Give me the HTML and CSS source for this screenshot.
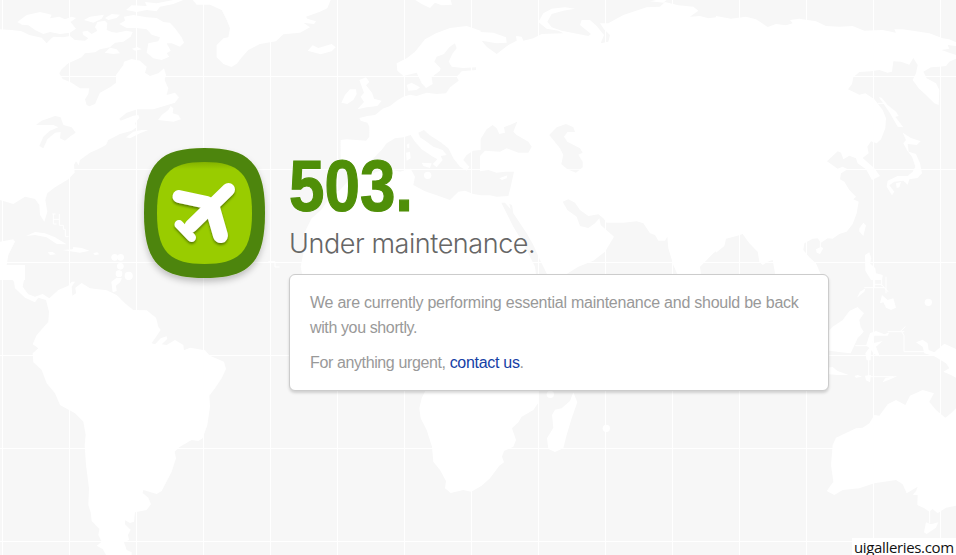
FILE: index.html
```html
<!DOCTYPE html>
<html lang="en">
<head>
<meta charset="utf-8">
<title>503. Under maintenance.</title>
<link rel="stylesheet" href="styles.css">
</head>
<body>
<svg class="map" width="956" height="555" viewBox="0 0 956 555" aria-hidden="true">
  <defs>
    <pattern id="grid" x="2" y="76" width="67" height="93" patternUnits="userSpaceOnUse">
      <path class="land" d="M0 0H67V1H1V93H0Z"/>
    </pattern>
  </defs>
  <rect width="956" height="555" fill="url(#grid)"/>

  <!-- North America, Greenland, Caribbean -->
  <g transform="scale(.33333)">
    <path class="land" d="M0 88L35 90 65 94 88 105 125 113 140 130 152 117 160 110 190 112 210 108 225 120 255 122 265 115 250 105 247 95 262 92 275 102 292 92 285 82 292 66 315 62 322 70 320 90 335 96 350 98 380 92 398 96 392 110 370 125 345 128 330 142 300 148 285 157 255 160 245 172 205 190 185 208 178 220 188 237 215 248 240 265 268 265 265 282 255 298 260 315 268 319 285 312 300 278 330 262 348 248 348 225 370 195 372 185 395 177 420 182 440 200 435 218 450 228 475 220 492 205 498 225 494 240 505 265 500 285 525 278 537 292 525 308 480 322 460 328 412 328 380 338 358 356 362 362 400 347 415 345 418 353 405 370 410 382 395 392 360 402 325 420 318 435 295 447 270 458 240 480 236 496 228 484 222 494 224 518 205 538 165 562 142 580 136 600 142 635 133 665 120 645 118 615 105 597 75 590 40 612 0 600Z"/>
    <path class="land" d="M52 66L80 45 120 36 155 44 150 55 178 50 195 58 215 50 228 54 212 66 228 86 210 98 180 102 150 96 130 102 105 90 85 76 66 74Z"/>
    <path class="land" d="M252 60L270 50 312 44 305 56 280 68ZM315 54L335 42 360 44 350 54 325 60ZM378 30L395 16 440 18 435 6 470 10 520 0 550 0 520 12 480 20 470 34 440 30 410 36ZM358 72L375 62 372 50 400 45 440 52 470 54 490 66 510 68 525 85 545 112 552 128 540 140 515 130 500 130 512 152 500 160 508 170 485 180 460 175 440 158 445 130 475 124 480 112 455 104 440 88 410 84 380 84ZM314 158L330 143 350 148 360 160 340 162ZM396 146L412 141 425 148 405 152ZM474 360L485 345 505 330 512 318 520 325 518 340 535 345 543 358 520 365ZM378 412L400 395 425 390 445 390 420 400 390 415Z"/>
    <path class="land" d="M578 0L722 0 722 176 712 190 695 201 670 192 650 172 650 135 670 115 685 112 690 85 680 60 665 30 630 14 590 14Z"/>
    <path class="sea" d="M108 375L125 362 165 348 182 352 190 375 215 382 227 398 212 408 195 422 180 415 182 396 165 398 142 418 130 445 118 438 130 410 150 392 175 382 160 375 135 375Z"/>
    <path class="land" d="M78 708L105 696 135 700 165 712 200 733 170 732 140 712 105 705ZM143 757L158 756 168 763 150 765ZM188 750L218 748 220 741 245 744 268 752 240 758ZM280 759L292 757 298 763 284 766ZM0 725L40 718 45 725 25 765 20 795 75 795 75 840 0 840Z"/>
    <circle class="land" cx="344" cy="772" r="10"/><circle class="land" cx="362" cy="772" r="10"/><circle class="land" cx="361" cy="799" r="10"/><circle class="land" cx="357" cy="821" r="10"/><circle class="land" cx="386" cy="829" r="11"/>
    <path class="coast" d="M157 642h10M160 642v30M160 658h18M178 642v34h12v12h6v22h10M160 672h10"/>
  </g>

  <!-- Atlantic, Europe, North Africa -->
  <g transform="translate(240 0) scale(.33333)">
    <path class="land" d="M0 0L272 0 262 25 240 35 198 50 202 56 228 64 222 72 190 68 210 82 180 98 130 103 108 124 60 132 25 150 0 178ZM203 152L218 136 235 144 275 132 287 142 275 154 242 163ZM526 0L632 0 636 14 605 16 585 8 570 24 545 12ZM358 240L378 232 388 246 378 256 396 278 402 296 425 302 412 318 380 322 352 328 372 306 362 290 372 278ZM304 308L315 285 330 268 348 268 350 282 340 300 322 312Z"/>
    <path class="land" d="M722 92L680 78 630 84 588 100 555 118 525 155 500 175 470 190 472 212 490 228 530 218 545 250 558 264 578 252 575 232 600 212 602 205 583 185 590 170 612 162 628 142 645 130 650 145 638 160 626 185 635 200 670 204 708 202 708 210 665 214 650 230 656 242 630 262 618 280 590 282 560 278 530 288 510 284 490 290 470 302 450 318 428 326 405 345 382 348 358 354 362 362 382 368 388 380 388 410 378 422 320 418 302 420 302 480 312 500 335 498 345 508 335 530 300 570 270 590 245 628 215 655 202 680 188 712 200 735 190 760 182 800 190 840 722 840 722 586 700 582 675 572 655 575 630 600 590 586 555 574 520 555 525 530 512 506 480 515 440 505 400 520 375 508 395 480 405 470 425 450 440 430 465 415 490 412 512 405 525 425 545 448 575 468 592 478 578 492 590 502 608 480 602 468 620 465 608 450 580 440 560 425 540 412 535 398 552 390 568 405 600 425 625 445 640 475 660 500 680 512 688 500 670 480 680 465 700 452 722 450Z"/>
    <path class="land" d="M500 255L515 248 540 262 530 270 505 272ZM500 434L508 430 508 445 502 444ZM498 458L510 455 512 475 500 482ZM545 488L575 490 570 504 550 498Z"/>
    <circle class="land" cx="563" cy="526" r="11"/>
    <path class="coast" d="M85 785h20v16h14"/>
  </g>

  <!-- Russia, Middle East, India -->
  <g transform="translate(480 0) scale(.33333)">
    <path class="land" d="M0 96L40 98 78 112 80 128 50 130 5 122 20 140 50 162 85 135 110 122 108 108 125 110 130 122 160 115 185 102 250 100 235 92 200 86 175 66 190 40 215 26 255 22 285 26 250 32 215 42 202 65 215 82 245 92 325 108 333 102 300 75 305 60 330 60 350 78 372 105 362 130 385 125 390 105 372 88 360 70 385 70 430 45 450 38 500 22 540 20 555 6 595 16 640 20 655 32 630 50 660 48 685 55 720 50 720 745 700 760 660 800 665 840 600 840 580 795 565 745 562 710 555 722 535 722 525 705 510 700 490 670 470 664 430 668 380 668 370 655 355 643 325 648 300 630 285 608 265 598 248 605 262 630 290 650 300 678 325 684 345 670 358 655 362 675 402 710 375 755 340 782 295 800 255 825 205 830 180 780 160 735 140 700 100 640 96 615 88 612 92 628 75 608 64 608 100 680 130 730 165 800 170 840 0 840 0 586 30 586 50 590 85 588 92 560 102 515 75 515 50 518 25 510 0 514 0 468 15 452 60 455 80 445 115 458 145 458 155 440 145 425 110 405 100 395 112 365 72 382 75 398 58 402 50 385 38 375 20 388 0 420Z"/>
    <path class="sea" d="M208 405L230 382 258 372 280 382 285 396 262 396 252 410 262 425 300 445 308 458 295 464 308 485 308 502 288 518 262 508 244 492 250 465 240 445Z"/>
    <path class="land" d="M58 535L82 526 80 535 66 540ZM510 4L530 0 560 0 550 8ZM243 508h66v2h-66Z"/>
  </g>

  <!-- East Asia -->
  <g transform="translate(716 0) scale(.33333)">
    <path class="land" d="M0 48L45 56 90 50 120 58 155 81 180 72 210 76 230 70 222 60 250 56 300 64 330 78 370 80 410 78 445 92 500 90 540 98 535 88 560 88 640 100 680 115 700 118 720 127 720 138 695 135 700 146 676 150 720 165 720 176 700 185 690 198 670 200 645 202 622 215 632 235 660 250 670 270 668 315 655 310 630 285 608 265 590 240 600 220 605 195 592 174 580 194 555 185 532 184 528 215 515 218 490 210 465 214 430 216 412 232 408 252 396 268 430 284 448 280 475 298 500 330 510 355 508 385 495 418 482 430 465 424 454 440 458 460 440 474 475 505 492 528 468 540 450 508 425 490 420 475 400 467 382 478 375 458 365 454 333 484 365 506 380 500 395 508 375 520 372 538 385 545 400 570 420 590 412 598 428 605 422 640 410 672 392 695 370 702 350 716 335 715 315 728 305 715 290 716 265 730 262 750 280 772 300 790 315 825 178 825 170 780 155 785 140 795 130 785 125 755 100 730 80 702 62 708 30 716 25 738 0 758Z"/>
    <path class="land" d="M488 291L498 294 515 315 540 335 548 348 538 350 562 382 545 380 522 340 505 315ZM560 398L585 414 614 424 602 435 575 432 578 455 600 462 612 490 618 520 605 534 580 538 575 554 562 542 535 545 520 556 535 575 528 586 512 560 515 542 545 528 575 528 590 515 598 500 588 470 574 452 562 430 570 420ZM540 550L555 546 550 562 542 564ZM430 685L442 668 450 676 442 708 430 695ZM300 748L315 740 322 745 312 762 302 758ZM447 765L460 757 466 775 462 790 478 805 480 820 500 825 498 840 465 840 448 812Z"/>
    <path class="coast" d="M485 310h20M313 715v28"/>
  </g>

  <!-- South America -->
  <g transform="translate(0 275) scale(.33333)">
    <path class="land" d="M25 0L75 0 68 35 85 58 105 65 128 57 148 70 175 45 205 32 215 20 225 20 215 35 217 62 228 55 226 38 245 24 270 40 320 46 350 60 375 85 400 105 440 106 468 128 475 155 482 165 455 205 465 208 482 190 500 184 502 192 485 208 500 210 525 195 550 210 552 226 570 218 615 226 630 242 672 260 678 282 665 310 645 340 628 362 630 395 622 450 608 490 595 498 575 495 540 515 524 530 528 550 515 590 485 648 470 657 430 645 428 654 445 668 453 688 440 705 405 712 402 740 390 744 375 736 375 748 392 764 384 780 387 795 372 802 380 825 395 832 395 840 318 840 308 822 290 812 305 800 295 780 298 762 275 738 272 712 265 690 267 640 258 570 254 510 257 480 250 440 225 415 180 390 165 355 140 325 125 285 100 262 98 235 115 220 98 208 110 180 145 140 147 110 138 75 115 68 105 82 75 68 45 40 42 20Z"/>
    <path class="land" d="M334 20L350 8 366 10 360 22 348 32 350 48 338 52Z"/><circle class="land" cx="386" cy="2" r="12"/>
  </g>

  <!-- Southern Africa -->
  <g transform="translate(400 375) scale(.33333)">
    <path class="land" d="M80 40L416 40 414 85 400 105 365 125 355 142 336 160 348 195 340 215 312 228 306 245 312 262 298 272 270 310 245 332 214 350 190 345 152 354 135 340 138 318 120 285 100 260 96 215 80 165 62 130 58 100 65 70ZM520 52L532 82 515 130 500 180 490 220 465 231 445 222 441 190 460 158 456 120 465 104 485 100 510 78Z"/>
    <circle class="land" cx="451" cy="58" r="11"/><circle class="land" cx="619" cy="160" r="11"/>
  </g>

  <!-- Indonesia, Australia -->
  <g transform="translate(716 275) scale(.33333)">
    <path class="land" d="M330 175L350 155 380 135 400 108 425 96 444 115 430 135 434 155 443 170 425 190 404 235 375 232 330 226ZM330 278L350 276 365 288 398 300 365 300 330 297ZM415 303L425 300 438 305 420 308ZM447 302L465 300 462 322 450 316ZM500 322L508 308 545 302 525 312ZM423 68L432 50 448 40 445 50ZM498 60L515 75 532 70 540 98 525 105 510 98 502 82 492 85ZM450 212L462 175 480 168 505 178 520 172 515 182 475 182 470 205 500 198 480 215 492 245 475 238 465 225 464 256 452 256 448 235 460 218ZM600 202L620 194 635 205 638 225 655 232 685 206 720 222 720 308 705 300 682 290 700 280 690 265 655 244 625 235 620 215Z"/>
    <path class="land" d="M720 400L705 415 688 428 660 405 640 380 654 355 620 345 582 362 568 390 540 375 515 388 490 422 475 420 460 445 440 458 420 460 360 488 350 510 345 570 352 620 332 648 355 660 380 645 430 640 475 625 540 615 560 628 572 655 605 635 600 648 590 660 605 660 604 690 625 700 640 710 650 702 665 715 690 698 720 692ZM630 742L645 748 667 742 660 758 632 777 624 772Z"/>
    <circle class="land" cx="637" cy="82" r="11"/>
    <path class="coast" d="M474 5h25M476 0v38M497 0v32M474 28h22l20 22M510 5v50M445 38h60M418 212h50M458 240v72M462 305h70M515 170h50M568 155l-12 12 8 15v48h80M641 705v40"/>
  </g>
</svg>

<main class="page">
  <svg class="logo" width="141" height="151" viewBox="0 0 141 151" role="img" aria-label="Plane">
    <defs>
      <filter id="drop" x="-20%" y="-20%" width="140%" height="140%"><feDropShadow dx="0" dy="4" stdDeviation="3" flood-color="#000" flood-opacity=".22"/></filter>
      <filter id="planeDrop" x="-20%" y="-20%" width="140%" height="140%"><feDropShadow dx="0" dy="2" stdDeviation="1.2" flood-color="#263f00" flood-opacity=".55"/></filter>
      <linearGradient id="lime" x1="0" y1="0" x2="0" y2="1"><stop offset="0" stop-color="#84b300"/><stop offset=".07" stop-color="#99cc00"/></linearGradient>
    </defs>
    <path fill="#4d8508" filter="url(#drop)" d="M70.500 10C114 10 131 24 131 75S114 140 70.500 140 10 126 10 75 27 10 70.500 10Z"/>
    <path fill="url(#lime)" d="M70.500 24C105 24 118 36 118 75S105 126 70.500 126 23 114 23 75 36 24 70.500 24Z"/>
    <g class="plane" filter="url(#planeDrop)">
      <path stroke-width="13" d="M94.500 51.500L57 88"/>
      <path stroke-width="13" d="M45 58.500L73 64.500"/>
      <path stroke-width="15" d="M86.500 97.500L78 68"/>
      <path stroke-width="9" d="M45 86.500L57.500 99.500"/>
    </g>
  </svg>
  <section class="content">
    <h1 class="code"><span>503.</span></h1>
    <h2 class="title">Under maintenance.</h2>
    <div class="card">
      <p><span class="lead">We are currently performing essential maintenance and should be back</span><br>with you shortly.</p>
      <p>For anything urgent, <a href="#">contact us</a>.</p>
    </div>
  </section>
</main>
<div class="watermark">uigalleries.com</div>
</body>
</html>
```
FILE: styles.css
```css
* { box-sizing: border-box; }
body {
  margin: 0;
  height: 555px;
  overflow: hidden;
  position: relative;
  background: #f7f7f7;
  font-family: "Liberation Sans", Arial, sans-serif;
}
.map { position: absolute; inset: 0; display: block; }
.land { fill: #fff; }
.sea { fill: #f7f7f7; }
.coast { fill: none; stroke: #fff; stroke-width: 3; }
.page {
  position: relative;
  display: flex;
  align-items: flex-start;
  padding: 138px 0 0 134px;
}
.logo { flex: none; }
.plane { fill: none; stroke: #fff; stroke-linecap: round; }
.content { width: 540px; margin-left: 14px; padding-top: 10px; }
h1, h2, p { margin: 0; }
.code {
  height: 78px;
  color: #4f8f08;
  font-size: 72px;
  line-height: 76px;
  font-weight: 700;
}
.code span {
  display: inline-block;
  transform-origin: 0 50%;
  transform: scaleX(.885);
  -webkit-text-stroke: 1.2px #4f8f08;
}
.title {
  height: 48px;
  color: #666;
  font: 300 27px/36px Inter, "Liberation Sans", sans-serif;
  letter-spacing: -.43px;
  white-space: nowrap;
}
.card {
  height: 117px;
  padding: 15px 20px;
  border: 1px solid #ccc;
  border-radius: 6px;
  background: #fff;
  box-shadow: 0 2px 3px rgba(0, 0, 0, .16);
  color: #999;
  font-size: 16px;
  line-height: 25px;
  letter-spacing: -.38px;
  white-space: nowrap;
}
.card .lead { letter-spacing: -.24px; }
.card p + p { margin-top: 10px; }
.card a { color: #1540a5; text-decoration: none; letter-spacing: -.3px; }
.watermark {
  position: absolute;
  right: 0;
  bottom: 0;
  width: 104px;
  height: 17px;
  padding-left: 2px;
  background: #fff;
  color: #111;
  font: 15px/18px "Open Sans", "Noto Sans", sans-serif;
  letter-spacing: -.35px;
  white-space: nowrap;
}
```
